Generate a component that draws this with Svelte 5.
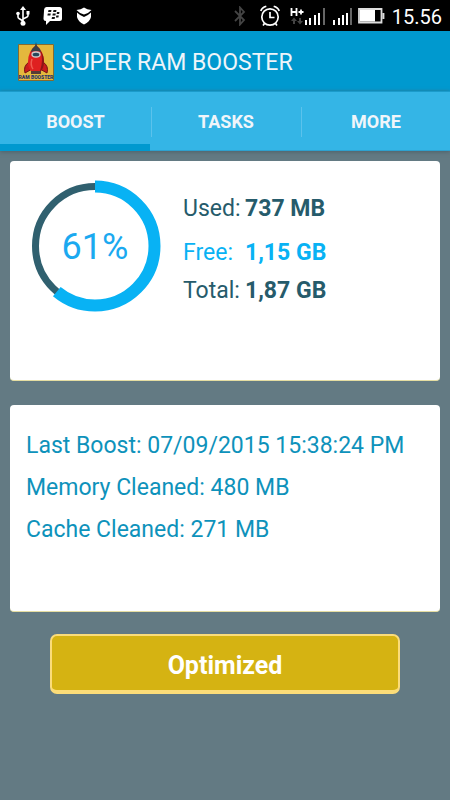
<script>
  const tabs = ['BOOST', 'TASKS', 'MORE'];
  let active = $state('BOOST');
  const used = 61;
  const radius = 59.5;
  const length = 2 * Math.PI * radius;
  const memory = [
    { label: 'Used:', value: '737 MB' },
    { label: 'Free:', value: '1,15 GB', free: true },
    { label: 'Total:', value: '1,87 GB' }
  ];
  const report = [
    'Last Boost: 07/09/2015 15:38:24 PM',
    'Memory Cleaned: 480 MB',
    'Cache Cleaned: 271 MB'
  ];
</script>

<div class="screen">
  <div class="status">
    <div class="notes">
      <svg width="14" height="20" viewBox="0 0 14 20" aria-label="USB">
        <g fill="none" stroke="#fff" stroke-width="1.6">
          <path d="M7 3v14M2 8v3q0 1 1 1.5l4 2.5M12 7v2.500q0 1-1 1.500L7 13" />
        </g>
        <path d="M7 0l3 4H4zM10.500 5h3v3.500h-3z" fill="#fff" />
        <circle cx="2" cy="7.500" r="1.800" fill="#fff" />
        <circle cx="7" cy="17.300" r="2.500" fill="#fff" />
      </svg>
      <svg width="20" height="20" viewBox="0 0 20 20" aria-label="Messenger">
        <path d="M3.500 1h13Q19 1 19 3.500v9q0 2.500-2.500 2.500H7l-4 4v-4Q.5 15 .5 12.500l.6-9Q1.300 1 3.500 1z" fill="#fff" />
        <path d="M5.500 4h3l-.4 2h-3zM10.500 4h3l-.4 2h-3zM4.800 7.500h3l-.4 2h-3zM9.800 7.500h3l-.4 2h-3zM14 6h2.500l-.4 2h-2.500zM9 11h3l-.4 2h-3zM13.300 9.500h2.500l-.4 2h-2.500z" fill="#111" />
      </svg>
      <svg width="16" height="18" viewBox="0 0 16 18" aria-label="Security">
        <path d="M.5 3Q5 2.500 8 .5q3 2 7.500 2.500Q13 6 8 7.500 3 6 .5 3z" fill="#fff" />
        <path d="M1 5.500q3 3 7 4.500 4-1.500 7-4.500v4.500Q14 14.500 8 17.500 2 14.500 1 10z" fill="#fff" />
      </svg>
    </div>
    <div class="system">
      <svg width="12" height="20" viewBox="0 0 12 20" aria-label="Bluetooth">
        <path d="M1 5l9 9-4 4.500v-17L10 6l-9 9" fill="none" stroke="#444" stroke-width="1.800" />
      </svg>
      <svg class="alarm" width="20" height="22" viewBox="0 0 20 22" aria-label="Alarm">
        <g fill="none" stroke="#fff" stroke-width="1.700">
          <circle cx="10" cy="12" r="8.200" />
          <path d="M10 7v5.500h4.500M.8 6q1-3.500 5.500-4.800M19.200 6q-1-3.500-5.500-4.800M4.500 18.500l-1.500 2M15.500 18.500l1.500 2" />
        </g>
      </svg>
      <svg class="signal" width="36" height="20" viewBox="0 0 36 20" aria-label="Mobile signal">
        <path d="M1.500 2v8M6.500 2v8M1.500 6h5M8.500 6h5M11 3.500v5" fill="none" stroke="#fff" stroke-width="1.800" />
        <path d="M4 11.500l3 3.500H5v3H3v-3H1zM10 18.500L7 15h2v-3h2v3h2z" fill="#444" />
        <path d="M15 14h2v5h-2zM19 12h2v7h-2zM24 9h2v10h-2zM28 7h2v12h-2z" fill="#fff" />
        <path d="M33 2h2v17h-2z" fill="#666" />
      </svg>
      <svg class="second" width="21" height="20" viewBox="0 0 21 20" aria-label="Second mobile signal">
        <path d="M0 14h2v5H0zM5 12h2v7H5zM9 9h2v10H9zM13 7h2v12h-2z" fill="#fff" />
        <path d="M17 2h2v17h-2z" fill="#666" />
      </svg>
      <svg class="battery" width="27" height="16" viewBox="0 0 27 16" aria-label="Battery">
        <path d="M1 1h22.500v13.500H1zM25.500 5v6" fill="none" stroke="#ddd" stroke-width="1.800" />
        <path d="M2 2h15v11.500H2z" fill="#fff" />
      </svg>
      <time>15.56</time>
    </div>
  </div>

  <header>
    <svg width="36" height="39" viewBox="0 0 36 39" aria-hidden="true">
      <path d="M.5 2.500h35v36H.5z" fill="#e4b83d" stroke="#846b30" />
      <path d="M11 20q-6 4-4 11l7-4zM25 20q6 4 4 11l-7-4z" fill="#c91c1c" stroke="#731212" />
      <path d="M13 28h10v4H13z" fill="#593b36" />
      <path d="M18 3q-8 6-8 17 0 6 3 9h10q3-3 3-9Q26 9 18 3z" fill="#df2020" />
      <path d="M22 8q4 9 0 21h1q3-3 3-9 0-7-4-12z" fill="#8c1616" />
      <path d="M18 0l1 4q3 2 4 6-5-2-10 0 1-4 4-6z" fill="#394047" />
      <ellipse cx="18" cy="12.500" rx="4" ry="2.500" fill="#25475b" stroke="#ccc" stroke-width="1.300" />
      <path d="M14 17q-2 6 1 10" fill="none" stroke="#f05b50" stroke-width="1.500" />
      <text x="18" y="37" text-anchor="middle" font-size="5" font-weight="900" fill="#26356b">RAM BOOSTER</text>
    </svg>
    <h1>SUPER RAM BOOSTER</h1>
  </header>

  <nav>
    {#each tabs as tab}
      <button class:active={tab === active} onclick={() => (active = tab)}><span>{tab}</span></button>
    {/each}
  </nav>

  <main>
    <section class="card usage">
      <div class="gauge">
        <svg viewBox="0 0 132 132" aria-hidden="true">
          <circle cx="66" cy="66" r={radius} fill="none" stroke="#30606f" stroke-width="7" />
          <circle cx="66" cy="66" r={radius} fill="none" stroke="#08b2f4" stroke-width="12"
            stroke-dasharray="{(length * used) / 100} {length}" transform="rotate(-90 66 66)" />
        </svg>
        <span>{used}%</span>
      </div>
      <dl>
        {#each memory as row}
          <div class:free={row.free}><dt>{row.label}</dt><dd>{row.value}</dd></div>
        {/each}
      </dl>
    </section>

    <section class="card report">
      {#each report as line}
        <p>{line}</p>
      {/each}
    </section>

    <button class="boost">Optimized</button>
  </main>
</div>

<style>
  :global(body) {
    margin: 0;
    background: #637a83;
  }
  .screen {
    min-height: 100vh;
    display: flex;
    flex-direction: column;
    font-family: Roboto, "Liberation Sans", sans-serif;
    font-size: 23px;
    background: #637a83;
  }
  svg {
    display: block;
    flex: none;
  }
  .status {
    height: 31px;
    padding: 0 8px 0 16px;
    display: flex;
    justify-content: space-between;
    background: #000;
    color: #fff;
  }
  .notes, .system {
    display: flex;
    align-items: center;
  }
  .notes {
    gap: 13px;
  }
  .alarm {
    margin-left: 14px;
  }
  .signal {
    margin-left: 10px;
  }
  .second {
    margin-left: 7px;
  }
  .battery {
    margin-left: 4px;
  }
  time {
    margin-left: 7px;
    padding-top: 2px;
    font-size: 20px;
    line-height: 30px;
  }
  header {
    height: 60px;
    padding: 0 18px;
    display: flex;
    align-items: center;
    gap: 7px;
    background: #0099cf;
    color: #eef5fa;
  }
  h1 {
    margin: 0;
    padding-top: 3px;
    font-size: 23px;
    font-weight: 400;
    line-height: 32px;
  }
  nav {
    height: 60px;
    display: flex;
    background: #34b5e6;
    box-shadow: inset 0 1px #1b9bcb, inset 0 -1px #2ea1cf, 0 1px 4px #4d626b;
  }
  nav button {
    flex: 1;
    padding: 2px 0 0 1px;
    border: 0;
    display: flex;
    align-items: center;
    background: none;
    color: #f0f5fa;
    font: bold 18px Roboto, "Liberation Sans", sans-serif;
  }
  nav span {
    flex: 1;
    line-height: 30px;
  }
  nav button + button span {
    border-left: 1px solid #5bc2ec;
  }
  nav .active {
    box-shadow: inset 0 -7px #0099cf;
  }
  main {
    padding: 10px;
    display: flex;
    flex-direction: column;
  }
  .card {
    box-sizing: border-box;
    border-bottom: 1px solid #e5dda2;
    border-radius: 4px;
    background: #fff;
  }
  .usage {
    min-height: 220px;
    padding: 19px;
    display: flex;
    align-items: flex-start;
    gap: 22px;
  }
  .gauge {
    width: 132px;
    display: grid;
    place-items: center;
    flex: none;
  }
  .gauge svg, .gauge span {
    grid-area: 1 / 1;
  }
  .gauge svg {
    width: 100%;
  }
  .gauge span {
    padding-top: 2px;
    color: #1ba9f0;
    font-size: 36px;
  }
  dl {
    margin: 13px 0 0;
    color: #265b6b;
  }
  dl div {
    display: flex;
    line-height: 32px;
  }
  dl .free {
    margin: 12px 0 6px;
    color: #08b2f4;
  }
  dt {
    width: 62px;
  }
  dd {
    margin: 0;
    font-weight: 700;
  }
  .report {
    min-height: 207px;
    margin-top: 24px;
    padding: 20px 16px;
    color: #0e92bb;
  }
  p {
    margin: 0;
    line-height: 42px;
  }
  .boost {
    min-height: 60px;
    margin: 22px 40px 0;
    padding: 4px 0 0;
    border: 2px solid #fbdc79;
    border-bottom-width: 4px;
    border-radius: 7px;
    background: #d5b312;
    color: #fff;
    font: bold 25px Roboto, "Liberation Sans", sans-serif;
  }
</style>
